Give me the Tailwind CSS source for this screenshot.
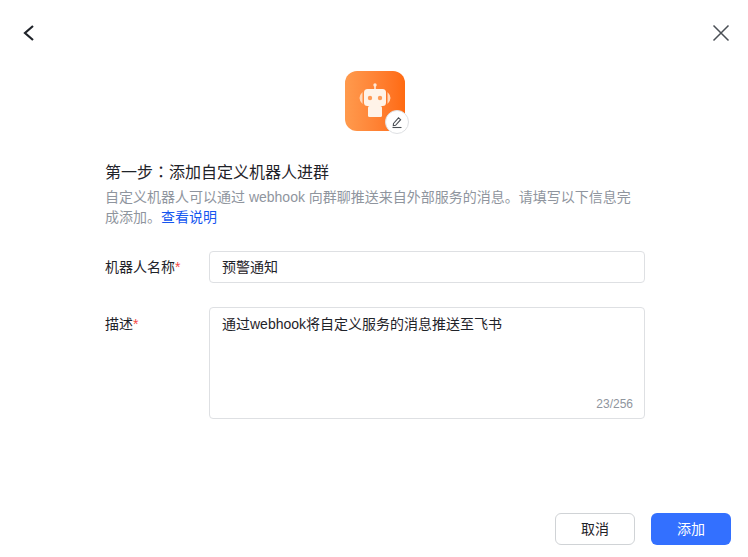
<!DOCTYPE html>
<html lang="zh-CN">
<head>
    <meta charset="UTF-8">
    <title>添加自定义机器人</title>
    <script src="https://cdn.jsdelivr.net/npm/@tailwindcss/browser@4"></script>
</head>
<body class="bg-white text-[#1f2329] font-['Liberation_Sans','Noto_Sans_CJK_SC',sans-serif]">
    <div class="w-[748px] h-[557px] flex flex-col overflow-hidden">
        <!-- top bar -->
        <header class="flex justify-between items-center h-[32px] mt-[17px] pl-[21px] pr-[18px] shrink-0">
            <svg class="w-[16px] h-[20px]" viewBox="0 0 16 20" fill="none" stroke="#1f2329" stroke-width="2.2"><path d="M12 3 L4 10 L12 17"/></svg>
            <svg class="w-[18px] h-[18px]" viewBox="0 0 18 18" fill="none" stroke="#4a4f55" stroke-width="1.5"><path d="M1.5 1.5 L16.5 16.5 M16.5 1.5 L1.5 16.5"/></svg>
        </header>

        <!-- avatar -->
        <div class="flex justify-center mt-[22px] pl-[2px] shrink-0">
            <div class="relative w-[60px] h-[60px] rounded-[12px] bg-gradient-to-r from-[#ff9a4d] to-[#ff6a10] flex items-center justify-center">
                <svg class="w-[44px] h-[44px]" viewBox="0 0 44 44">
                    <circle cx="22" cy="6" r="1.7" fill="#ffe9d8"/>
                    <rect x="21.2" y="6" width="1.6" height="4" fill="#ffe9d8"/>
                    <rect x="11" y="10" width="22" height="17" rx="3.5" fill="#fff3e8"/>
                    <circle cx="17" cy="19" r="2.2" fill="#ff9a55"/>
                    <circle cx="27" cy="19" r="2.2" fill="#ff9a55"/>
                    <path d="M9.5 13 Q3.5 19 9.5 25 Z M34.5 13 Q40.5 19 34.5 25 Z" fill="#ffd9bd"/>
                    <rect x="15" y="27" width="14" height="11" rx="1.5" fill="#fff3e8"/>
                </svg>
                <div class="absolute right-[-4px] bottom-[-3px] w-[24px] h-[24px] rounded-full bg-white border border-[#dee0e3] flex items-center justify-center">
                    <svg class="w-[14px] h-[14px]" viewBox="0 0 14 14" fill="none" stroke="#4a4f55" stroke-width="1.1"><path d="M3.5 8.5 L8.5 2.8 L10.6 4.7 L5.6 10.3 L3.3 10.6 Z"/><path d="M2.5 12.5 H11.5"/></svg>
                </div>
            </div>
        </div>

        <!-- intro -->
        <main class="pl-[105px] pr-[103px] flex-1">
            <h1 class="h-[24px] text-[16px] leading-[24px] mt-[28px]">第一步<span lang="zh-TW" class="font-['Noto_Sans_CJK_TC']">：</span>添加自定义机器人进群</h1>
            <p class="w-[530px] text-[14px] leading-[20px] text-[#8f959e] mt-[4px]">自定义机器人可以通过 webhook 向群聊推送来自外部服务的消息。请填写以下信息完成添加。<a class="text-[#1456f0]">查看说明</a></p>

            <div class="flex mt-[24px]">
                <label class="w-[104px] shrink-0 text-[14px] leading-[32px]">机器人名称<span class="text-[#f54a45]">*</span></label>
                <div class="flex-1 h-[32px] border border-[#dee0e3] rounded-[4px] px-[12px] text-[14px] leading-[30px]">预警通知</div>
            </div>

            <div class="flex mt-[24px]">
                <label class="w-[104px] shrink-0 text-[14px] leading-[34px]">描述<span class="text-[#f54a45]">*</span></label>
                <div class="relative flex-1 h-[112px] border border-[#dee0e3] rounded-[4px] px-[12px] py-[5px] text-[14px] leading-[22px]">
                    通过webhook将自定义服务的消息推送至飞书
                    <span class="absolute right-[11px] bottom-[5px] text-[12px] leading-[18px] text-[#8f959e]">23/256</span>
                </div>
            </div>
        </main>

        <!-- footer -->
        <footer class="flex justify-end gap-[16px] pr-[17px] pb-[12px] shrink-0">
            <button class="w-[80px] h-[32px] rounded-[6px] border border-[#d0d3d6] bg-white text-[14px]">取消</button>
            <button class="w-[80px] h-[32px] rounded-[6px] bg-[#3370ff] text-white text-[14px]">添加</button>
        </footer>
    </div>
</body>
</html>
